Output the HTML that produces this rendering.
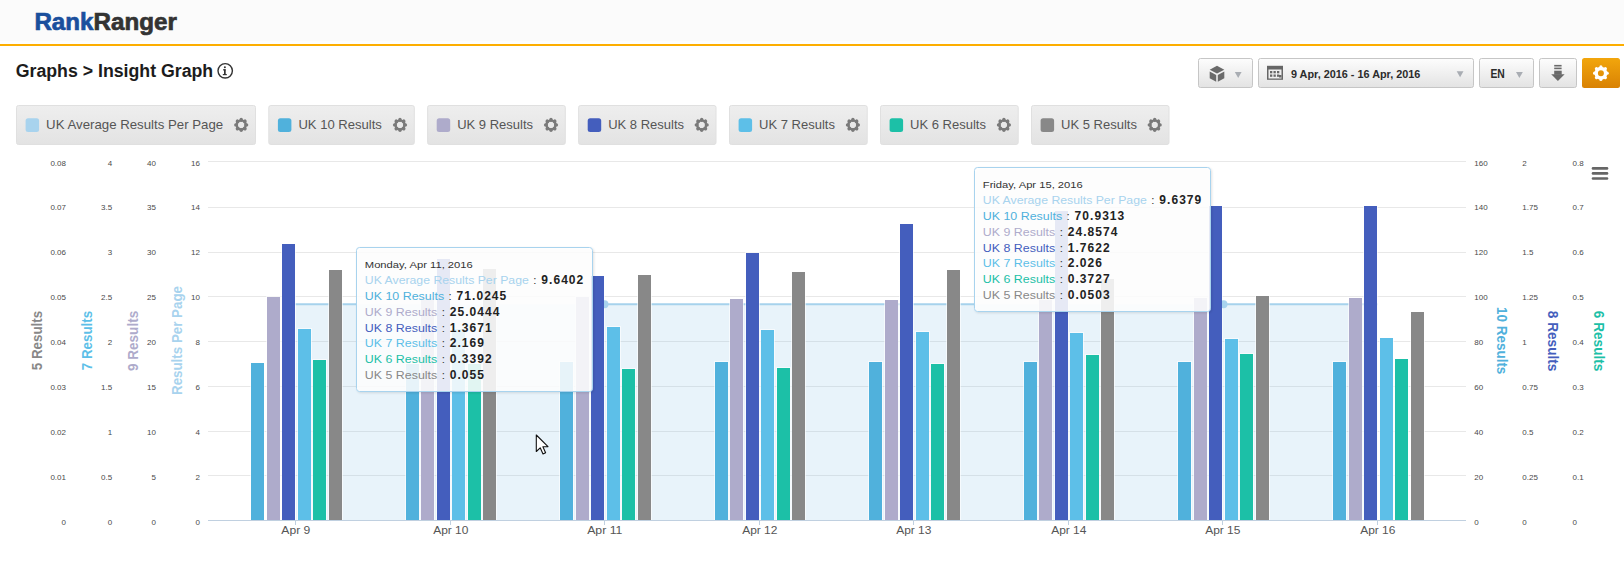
<!DOCTYPE html>
<html><head><meta charset="utf-8"><title>Insight Graph</title>
<style>
html,body{margin:0;padding:0;background:#fff;}
body{width:1624px;height:566px;overflow:hidden;position:relative;font-family:"Liberation Sans", sans-serif;}
svg{position:absolute;left:0;top:0;display:block;}
text{font-family:"Liberation Sans", sans-serif;}
</style></head><body>
<svg width="1624" height="566" viewBox="0 0 1624 566">
<defs>
<linearGradient id="gbtn" x1="0" y1="0" x2="0" y2="1">
<stop offset="0" stop-color="#fdfdfd"/><stop offset="1" stop-color="#e3e3e3"/></linearGradient>
<linearGradient id="gorg" x1="0" y1="0" x2="0" y2="1">
<stop offset="0" stop-color="#f2a60c"/><stop offset="1" stop-color="#d98204"/></linearGradient>
<linearGradient id="gleg" x1="0" y1="0" x2="0" y2="1">
<stop offset="0" stop-color="#eeeeee"/><stop offset="1" stop-color="#e3e3e3"/></linearGradient>
<filter id="tsh" x="-10%" y="-10%" width="120%" height="120%">
<feDropShadow dx="1" dy="1" stdDeviation="1.2" flood-color="#000" flood-opacity="0.12"/></filter>
</defs>

<rect x="0" y="0" width="1624" height="44" fill="#fbfbfb"/>
<rect x="0" y="41" width="1624" height="3" fill="#fdfefe"/>
<rect x="0" y="44" width="1624" height="2" fill="#fdae00"/>
<text x="34.4" y="29.7" font-size="24" font-weight="bold" textLength="142.4" lengthAdjust="spacingAndGlyphs"><tspan fill="#1a4f9d" stroke="#1a4f9d" stroke-width="0.7">Rank</tspan><tspan fill="#333333" stroke="#333333" stroke-width="0.7">Ranger</tspan></text>
<text x="15.7" y="76.5" font-size="18" fill="#1c1c1c" font-weight="bold" text-anchor="start" textLength="197.5" lengthAdjust="spacingAndGlyphs" >Graphs &gt; Insight Graph</text>
<circle cx="225.2" cy="70.8" r="7.2" fill="none" stroke="#333" stroke-width="1.4"/>
<rect x="224" y="69.3" width="1.7" height="5" fill="#333"/><rect x="222.8" y="74" width="4" height="1.2" fill="#333"/><rect x="223" y="69.3" width="2.6" height="1.1" fill="#333"/><circle cx="224.9" cy="67.2" r="1" fill="#333"/>
<rect x="1198.5" y="58.5" width="54" height="29" rx="2" ry="2" fill="url(#gbtn)" stroke="#c6c6c6" stroke-width="1"/>
<rect x="1258.5" y="58.5" width="215" height="29" rx="2" ry="2" fill="url(#gbtn)" stroke="#c6c6c6" stroke-width="1"/>
<rect x="1479.5" y="58.5" width="54" height="29" rx="2" ry="2" fill="url(#gbtn)" stroke="#c6c6c6" stroke-width="1"/>
<rect x="1539.5" y="58.5" width="37" height="29" rx="2" ry="2" fill="url(#gbtn)" stroke="#c6c6c6" stroke-width="1"/>
<rect x="1582" y="58" width="38" height="30" rx="2.5" fill="url(#gorg)"/>
<g fill="#6a6a6a"><polygon points="1217,65.8 1224.3,69.8 1217,73.6 1209.7,69.8"/><polygon points="1209.7,71.4 1216.2,75 1216.2,81.8 1209.7,78.2"/><polygon points="1224.3,71.4 1217.8,75 1217.8,81.8 1224.3,78.2"/></g>
<polygon points="1234.8,72.1 1241.6000000000001,72.1 1238.2,78.1" fill="#a9adb3"/>
<polygon points="1456.6999999999998,71.2 1463.5,71.2 1460.1,77.2" fill="#a9adb3"/>
<polygon points="1516.0,72 1522.8000000000002,72 1519.4,78" fill="#a9adb3"/>
<rect x="1267" y="65.8" width="16" height="14" fill="#666"/>
<rect x="1268.5" y="69.5" width="13" height="9" fill="#eee"/>
<rect x="1270" y="71" width="2.3" height="2.3" fill="#666"/>
<rect x="1273.5" y="71" width="2.3" height="2.3" fill="#666"/>
<rect x="1277" y="71" width="2.3" height="2.3" fill="#666"/>
<rect x="1270" y="74.5" width="2.3" height="2.3" fill="#666"/>
<rect x="1273.5" y="74.5" width="2.3" height="2.3" fill="#666"/>
<rect x="1277" y="74.5" width="2.3" height="2.3" fill="#666"/>
<rect x="1279" y="75" width="2.5" height="2.5" fill="#666"/>
<text x="1290.9" y="77.7" font-size="11" fill="#2b2b2b" font-weight="bold" text-anchor="start" textLength="129.5" lengthAdjust="spacingAndGlyphs" >9 Apr, 2016 - 16 Apr, 2016</text>
<text x="1490.4" y="77.8" font-size="12" fill="#2b2b2b" font-weight="bold" text-anchor="start" textLength="14.4" lengthAdjust="spacingAndGlyphs" >EN</text>
<g fill="#6a6a6a"><rect x="1554.2" y="64.9" width="7.4" height="1.6"/><rect x="1554.2" y="67.6" width="7.4" height="1.6"/><rect x="1554.2" y="70.7" width="7.5" height="4"/><polygon points="1551.2,74.2 1564.6,74.2 1557.9,80.9"/></g>
<g><circle cx="1600.9" cy="73.2" r="4.70" fill="none" stroke="#ffffff" stroke-width="3.40"/><line x1="1606.30" y1="73.20" x2="1607.20" y2="73.20" stroke="#ffffff" stroke-width="3.2" stroke-linecap="round"/><line x1="1604.72" y1="77.02" x2="1605.35" y2="77.65" stroke="#ffffff" stroke-width="3.2" stroke-linecap="round"/><line x1="1600.90" y1="78.60" x2="1600.90" y2="79.50" stroke="#ffffff" stroke-width="3.2" stroke-linecap="round"/><line x1="1597.08" y1="77.02" x2="1596.45" y2="77.65" stroke="#ffffff" stroke-width="3.2" stroke-linecap="round"/><line x1="1595.50" y1="73.20" x2="1594.60" y2="73.20" stroke="#ffffff" stroke-width="3.2" stroke-linecap="round"/><line x1="1597.08" y1="69.38" x2="1596.45" y2="68.75" stroke="#ffffff" stroke-width="3.2" stroke-linecap="round"/><line x1="1600.90" y1="67.80" x2="1600.90" y2="66.90" stroke="#ffffff" stroke-width="3.2" stroke-linecap="round"/><line x1="1604.72" y1="69.38" x2="1605.35" y2="68.75" stroke="#ffffff" stroke-width="3.2" stroke-linecap="round"/></g>
<rect x="16.5" y="105.5" width="239" height="39" rx="2" fill="url(#gleg)" stroke="#e0e0e0" stroke-width="1"/>
<rect x="25.6" y="118.2" width="13.5" height="13.8" rx="2.5" fill="#a8d3ee"/>
<text x="46.1" y="128.7" font-size="13" fill="#555555" font-weight="normal" text-anchor="start" textLength="177.1" lengthAdjust="spacingAndGlyphs" >UK Average Results Per Page</text>
<g><circle cx="241.2" cy="124.9" r="4.50" fill="none" stroke="#7a7a7a" stroke-width="2.40"/><line x1="245.90" y1="124.90" x2="246.60" y2="124.90" stroke="#7a7a7a" stroke-width="3.4" stroke-linecap="round"/><line x1="244.52" y1="128.22" x2="245.02" y2="128.72" stroke="#7a7a7a" stroke-width="3.4" stroke-linecap="round"/><line x1="241.20" y1="129.60" x2="241.20" y2="130.30" stroke="#7a7a7a" stroke-width="3.4" stroke-linecap="round"/><line x1="237.88" y1="128.22" x2="237.38" y2="128.72" stroke="#7a7a7a" stroke-width="3.4" stroke-linecap="round"/><line x1="236.50" y1="124.90" x2="235.80" y2="124.90" stroke="#7a7a7a" stroke-width="3.4" stroke-linecap="round"/><line x1="237.88" y1="121.58" x2="237.38" y2="121.08" stroke="#7a7a7a" stroke-width="3.4" stroke-linecap="round"/><line x1="241.20" y1="120.20" x2="241.20" y2="119.50" stroke="#7a7a7a" stroke-width="3.4" stroke-linecap="round"/><line x1="244.52" y1="121.58" x2="245.02" y2="121.08" stroke="#7a7a7a" stroke-width="3.4" stroke-linecap="round"/></g>
<rect x="268.8" y="105.5" width="145.5" height="39" rx="2" fill="url(#gleg)" stroke="#e0e0e0" stroke-width="1"/>
<rect x="277.90000000000003" y="118.2" width="13.5" height="13.8" rx="2.5" fill="#50b1dc"/>
<text x="298.4" y="128.7" font-size="13" fill="#555555" font-weight="normal" text-anchor="start" textLength="83.5" lengthAdjust="spacingAndGlyphs" >UK 10 Results</text>
<g><circle cx="400.0" cy="124.9" r="4.50" fill="none" stroke="#7a7a7a" stroke-width="2.40"/><line x1="404.70" y1="124.90" x2="405.40" y2="124.90" stroke="#7a7a7a" stroke-width="3.4" stroke-linecap="round"/><line x1="403.32" y1="128.22" x2="403.82" y2="128.72" stroke="#7a7a7a" stroke-width="3.4" stroke-linecap="round"/><line x1="400.00" y1="129.60" x2="400.00" y2="130.30" stroke="#7a7a7a" stroke-width="3.4" stroke-linecap="round"/><line x1="396.68" y1="128.22" x2="396.18" y2="128.72" stroke="#7a7a7a" stroke-width="3.4" stroke-linecap="round"/><line x1="395.30" y1="124.90" x2="394.60" y2="124.90" stroke="#7a7a7a" stroke-width="3.4" stroke-linecap="round"/><line x1="396.68" y1="121.58" x2="396.18" y2="121.08" stroke="#7a7a7a" stroke-width="3.4" stroke-linecap="round"/><line x1="400.00" y1="120.20" x2="400.00" y2="119.50" stroke="#7a7a7a" stroke-width="3.4" stroke-linecap="round"/><line x1="403.32" y1="121.58" x2="403.82" y2="121.08" stroke="#7a7a7a" stroke-width="3.4" stroke-linecap="round"/></g>
<rect x="427.6" y="105.5" width="137.69999999999993" height="39" rx="2" fill="url(#gleg)" stroke="#e0e0e0" stroke-width="1"/>
<rect x="436.70000000000005" y="118.2" width="13.5" height="13.8" rx="2.5" fill="#aeabcb"/>
<text x="457.2" y="128.7" font-size="13" fill="#555555" font-weight="normal" text-anchor="start" textLength="75.9" lengthAdjust="spacingAndGlyphs" >UK 9 Results</text>
<g><circle cx="551.0" cy="124.9" r="4.50" fill="none" stroke="#7a7a7a" stroke-width="2.40"/><line x1="555.70" y1="124.90" x2="556.40" y2="124.90" stroke="#7a7a7a" stroke-width="3.4" stroke-linecap="round"/><line x1="554.32" y1="128.22" x2="554.82" y2="128.72" stroke="#7a7a7a" stroke-width="3.4" stroke-linecap="round"/><line x1="551.00" y1="129.60" x2="551.00" y2="130.30" stroke="#7a7a7a" stroke-width="3.4" stroke-linecap="round"/><line x1="547.68" y1="128.22" x2="547.18" y2="128.72" stroke="#7a7a7a" stroke-width="3.4" stroke-linecap="round"/><line x1="546.30" y1="124.90" x2="545.60" y2="124.90" stroke="#7a7a7a" stroke-width="3.4" stroke-linecap="round"/><line x1="547.68" y1="121.58" x2="547.18" y2="121.08" stroke="#7a7a7a" stroke-width="3.4" stroke-linecap="round"/><line x1="551.00" y1="120.20" x2="551.00" y2="119.50" stroke="#7a7a7a" stroke-width="3.4" stroke-linecap="round"/><line x1="554.32" y1="121.58" x2="554.82" y2="121.08" stroke="#7a7a7a" stroke-width="3.4" stroke-linecap="round"/></g>
<rect x="578.6" y="105.5" width="137.39999999999998" height="39" rx="2" fill="url(#gleg)" stroke="#e0e0e0" stroke-width="1"/>
<rect x="587.7" y="118.2" width="13.5" height="13.8" rx="2.5" fill="#445ebd"/>
<text x="608.2" y="128.7" font-size="13" fill="#555555" font-weight="normal" text-anchor="start" textLength="75.9" lengthAdjust="spacingAndGlyphs" >UK 8 Results</text>
<g><circle cx="701.7" cy="124.9" r="4.50" fill="none" stroke="#7a7a7a" stroke-width="2.40"/><line x1="706.40" y1="124.90" x2="707.10" y2="124.90" stroke="#7a7a7a" stroke-width="3.4" stroke-linecap="round"/><line x1="705.02" y1="128.22" x2="705.52" y2="128.72" stroke="#7a7a7a" stroke-width="3.4" stroke-linecap="round"/><line x1="701.70" y1="129.60" x2="701.70" y2="130.30" stroke="#7a7a7a" stroke-width="3.4" stroke-linecap="round"/><line x1="698.38" y1="128.22" x2="697.88" y2="128.72" stroke="#7a7a7a" stroke-width="3.4" stroke-linecap="round"/><line x1="697.00" y1="124.90" x2="696.30" y2="124.90" stroke="#7a7a7a" stroke-width="3.4" stroke-linecap="round"/><line x1="698.38" y1="121.58" x2="697.88" y2="121.08" stroke="#7a7a7a" stroke-width="3.4" stroke-linecap="round"/><line x1="701.70" y1="120.20" x2="701.70" y2="119.50" stroke="#7a7a7a" stroke-width="3.4" stroke-linecap="round"/><line x1="705.02" y1="121.58" x2="705.52" y2="121.08" stroke="#7a7a7a" stroke-width="3.4" stroke-linecap="round"/></g>
<rect x="729.5" y="105.5" width="137.70000000000005" height="39" rx="2" fill="url(#gleg)" stroke="#e0e0e0" stroke-width="1"/>
<rect x="738.6" y="118.2" width="13.5" height="13.8" rx="2.5" fill="#5dbfe8"/>
<text x="759.1" y="128.7" font-size="13" fill="#555555" font-weight="normal" text-anchor="start" textLength="75.9" lengthAdjust="spacingAndGlyphs" >UK 7 Results</text>
<g><circle cx="852.9" cy="124.9" r="4.50" fill="none" stroke="#7a7a7a" stroke-width="2.40"/><line x1="857.60" y1="124.90" x2="858.30" y2="124.90" stroke="#7a7a7a" stroke-width="3.4" stroke-linecap="round"/><line x1="856.22" y1="128.22" x2="856.72" y2="128.72" stroke="#7a7a7a" stroke-width="3.4" stroke-linecap="round"/><line x1="852.90" y1="129.60" x2="852.90" y2="130.30" stroke="#7a7a7a" stroke-width="3.4" stroke-linecap="round"/><line x1="849.58" y1="128.22" x2="849.08" y2="128.72" stroke="#7a7a7a" stroke-width="3.4" stroke-linecap="round"/><line x1="848.20" y1="124.90" x2="847.50" y2="124.90" stroke="#7a7a7a" stroke-width="3.4" stroke-linecap="round"/><line x1="849.58" y1="121.58" x2="849.08" y2="121.08" stroke="#7a7a7a" stroke-width="3.4" stroke-linecap="round"/><line x1="852.90" y1="120.20" x2="852.90" y2="119.50" stroke="#7a7a7a" stroke-width="3.4" stroke-linecap="round"/><line x1="856.22" y1="121.58" x2="856.72" y2="121.08" stroke="#7a7a7a" stroke-width="3.4" stroke-linecap="round"/></g>
<rect x="880.5" y="105.5" width="137.70000000000005" height="39" rx="2" fill="url(#gleg)" stroke="#e0e0e0" stroke-width="1"/>
<rect x="889.6" y="118.2" width="13.5" height="13.8" rx="2.5" fill="#1cc0a7"/>
<text x="910.1" y="128.7" font-size="13" fill="#555555" font-weight="normal" text-anchor="start" textLength="75.9" lengthAdjust="spacingAndGlyphs" >UK 6 Results</text>
<g><circle cx="1003.9" cy="124.9" r="4.50" fill="none" stroke="#7a7a7a" stroke-width="2.40"/><line x1="1008.60" y1="124.90" x2="1009.30" y2="124.90" stroke="#7a7a7a" stroke-width="3.4" stroke-linecap="round"/><line x1="1007.22" y1="128.22" x2="1007.72" y2="128.72" stroke="#7a7a7a" stroke-width="3.4" stroke-linecap="round"/><line x1="1003.90" y1="129.60" x2="1003.90" y2="130.30" stroke="#7a7a7a" stroke-width="3.4" stroke-linecap="round"/><line x1="1000.58" y1="128.22" x2="1000.08" y2="128.72" stroke="#7a7a7a" stroke-width="3.4" stroke-linecap="round"/><line x1="999.20" y1="124.90" x2="998.50" y2="124.90" stroke="#7a7a7a" stroke-width="3.4" stroke-linecap="round"/><line x1="1000.58" y1="121.58" x2="1000.08" y2="121.08" stroke="#7a7a7a" stroke-width="3.4" stroke-linecap="round"/><line x1="1003.90" y1="120.20" x2="1003.90" y2="119.50" stroke="#7a7a7a" stroke-width="3.4" stroke-linecap="round"/><line x1="1007.22" y1="121.58" x2="1007.72" y2="121.08" stroke="#7a7a7a" stroke-width="3.4" stroke-linecap="round"/></g>
<rect x="1031.5" y="105.5" width="137.5" height="39" rx="2" fill="url(#gleg)" stroke="#e0e0e0" stroke-width="1"/>
<rect x="1040.6" y="118.2" width="13.5" height="13.8" rx="2.5" fill="#888888"/>
<text x="1061.1" y="128.7" font-size="13" fill="#555555" font-weight="normal" text-anchor="start" textLength="75.9" lengthAdjust="spacingAndGlyphs" >UK 5 Results</text>
<g><circle cx="1154.7" cy="124.9" r="4.50" fill="none" stroke="#7a7a7a" stroke-width="2.40"/><line x1="1159.40" y1="124.90" x2="1160.10" y2="124.90" stroke="#7a7a7a" stroke-width="3.4" stroke-linecap="round"/><line x1="1158.02" y1="128.22" x2="1158.52" y2="128.72" stroke="#7a7a7a" stroke-width="3.4" stroke-linecap="round"/><line x1="1154.70" y1="129.60" x2="1154.70" y2="130.30" stroke="#7a7a7a" stroke-width="3.4" stroke-linecap="round"/><line x1="1151.38" y1="128.22" x2="1150.88" y2="128.72" stroke="#7a7a7a" stroke-width="3.4" stroke-linecap="round"/><line x1="1150.00" y1="124.90" x2="1149.30" y2="124.90" stroke="#7a7a7a" stroke-width="3.4" stroke-linecap="round"/><line x1="1151.38" y1="121.58" x2="1150.88" y2="121.08" stroke="#7a7a7a" stroke-width="3.4" stroke-linecap="round"/><line x1="1154.70" y1="120.20" x2="1154.70" y2="119.50" stroke="#7a7a7a" stroke-width="3.4" stroke-linecap="round"/><line x1="1158.02" y1="121.58" x2="1158.52" y2="121.08" stroke="#7a7a7a" stroke-width="3.4" stroke-linecap="round"/></g>
<rect x="208" y="161" width="1258" height="1" fill="#e8e8e8"/>
<rect x="208" y="207" width="1258" height="1" fill="#e8e8e8"/>
<rect x="208" y="252" width="1258" height="1" fill="#e8e8e8"/>
<rect x="208" y="296" width="1258" height="1" fill="#e8e8e8"/>
<rect x="208" y="341" width="1258" height="1" fill="#e8e8e8"/>
<rect x="208" y="386" width="1258" height="1" fill="#e8e8e8"/>
<rect x="208" y="431" width="1258" height="1" fill="#e8e8e8"/>
<rect x="208" y="475" width="1258" height="1" fill="#e8e8e8"/>
<path d="M295.5,520.5 L295.5,304.2 L1377.5,304.2 L1377.5,520.5 Z" fill="rgba(140,195,232,0.2)"/>
<line x1="295.3" y1="304.2" x2="357" y2="304.2" stroke="#a6d2ec" stroke-width="2"/>
<line x1="592" y1="304.2" x2="975" y2="304.2" stroke="#a6d2ec" stroke-width="2"/>
<line x1="1210" y1="304.2" x2="1377.5" y2="304.2" stroke="#a6d2ec" stroke-width="2"/>
<rect x="250" y="362" width="15" height="158" fill="rgba(255,255,255,0.6)"/>
<rect x="266" y="296" width="15" height="224" fill="rgba(255,255,255,0.6)"/>
<rect x="281" y="243" width="15" height="277" fill="rgba(255,255,255,0.6)"/>
<rect x="297" y="328" width="15" height="192" fill="rgba(255,255,255,0.6)"/>
<rect x="312" y="359" width="15" height="161" fill="rgba(255,255,255,0.6)"/>
<rect x="328" y="269" width="15" height="251" fill="rgba(255,255,255,0.6)"/>
<rect x="405" y="363" width="15" height="157" fill="rgba(255,255,255,0.6)"/>
<rect x="420" y="297" width="15" height="223" fill="rgba(255,255,255,0.6)"/>
<rect x="436" y="258" width="15" height="262" fill="rgba(255,255,255,0.6)"/>
<rect x="451" y="328" width="15" height="192" fill="rgba(255,255,255,0.6)"/>
<rect x="467" y="363" width="15" height="157" fill="rgba(255,255,255,0.6)"/>
<rect x="482" y="268" width="15" height="252" fill="rgba(255,255,255,0.6)"/>
<rect x="559" y="361" width="15" height="159" fill="rgba(255,255,255,0.6)"/>
<rect x="575" y="296" width="15" height="224" fill="rgba(255,255,255,0.6)"/>
<rect x="590" y="275" width="15" height="245" fill="rgba(255,255,255,0.6)"/>
<rect x="606" y="326" width="15" height="194" fill="rgba(255,255,255,0.6)"/>
<rect x="621" y="368" width="15" height="152" fill="rgba(255,255,255,0.6)"/>
<rect x="637" y="274" width="15" height="246" fill="rgba(255,255,255,0.6)"/>
<rect x="714" y="361" width="15" height="159" fill="rgba(255,255,255,0.6)"/>
<rect x="729" y="298" width="15" height="222" fill="rgba(255,255,255,0.6)"/>
<rect x="745" y="252" width="15" height="268" fill="rgba(255,255,255,0.6)"/>
<rect x="760" y="329" width="15" height="191" fill="rgba(255,255,255,0.6)"/>
<rect x="776" y="367" width="15" height="153" fill="rgba(255,255,255,0.6)"/>
<rect x="791" y="271" width="15" height="249" fill="rgba(255,255,255,0.6)"/>
<rect x="868" y="361" width="15" height="159" fill="rgba(255,255,255,0.6)"/>
<rect x="884" y="299" width="15" height="221" fill="rgba(255,255,255,0.6)"/>
<rect x="899" y="223" width="15" height="297" fill="rgba(255,255,255,0.6)"/>
<rect x="915" y="331" width="15" height="189" fill="rgba(255,255,255,0.6)"/>
<rect x="930" y="363" width="15" height="157" fill="rgba(255,255,255,0.6)"/>
<rect x="946" y="269" width="15" height="251" fill="rgba(255,255,255,0.6)"/>
<rect x="1023" y="361" width="15" height="159" fill="rgba(255,255,255,0.6)"/>
<rect x="1038" y="299" width="15" height="221" fill="rgba(255,255,255,0.6)"/>
<rect x="1054" y="210" width="15" height="310" fill="rgba(255,255,255,0.6)"/>
<rect x="1069" y="332" width="15" height="188" fill="rgba(255,255,255,0.6)"/>
<rect x="1085" y="354" width="15" height="166" fill="rgba(255,255,255,0.6)"/>
<rect x="1100" y="278" width="15" height="242" fill="rgba(255,255,255,0.6)"/>
<rect x="1177" y="361" width="15" height="159" fill="rgba(255,255,255,0.6)"/>
<rect x="1193" y="297" width="15" height="223" fill="rgba(255,255,255,0.6)"/>
<rect x="1208" y="205" width="15" height="315" fill="rgba(255,255,255,0.6)"/>
<rect x="1224" y="338" width="15" height="182" fill="rgba(255,255,255,0.6)"/>
<rect x="1239" y="353" width="15" height="167" fill="rgba(255,255,255,0.6)"/>
<rect x="1255" y="295" width="15" height="225" fill="rgba(255,255,255,0.6)"/>
<rect x="1332" y="361" width="15" height="159" fill="rgba(255,255,255,0.6)"/>
<rect x="1348" y="297" width="15" height="223" fill="rgba(255,255,255,0.6)"/>
<rect x="1363" y="205" width="15" height="315" fill="rgba(255,255,255,0.6)"/>
<rect x="1379" y="337" width="15" height="183" fill="rgba(255,255,255,0.6)"/>
<rect x="1394" y="358" width="15" height="162" fill="rgba(255,255,255,0.6)"/>
<rect x="1410" y="311" width="15" height="209" fill="rgba(255,255,255,0.6)"/>
<circle cx="604.5" cy="304.2" r="4" fill="#a8d3ee"/>
<circle cx="1223.5" cy="304.2" r="4" fill="#a8d3ee"/>
<rect x="251" y="363" width="13" height="157" fill="#50b1dc"/>
<rect x="267" y="297" width="13" height="223" fill="#aeabcb"/>
<rect x="282" y="244" width="13" height="276" fill="#445ebd"/>
<rect x="298" y="329" width="13" height="191" fill="#5dbfe8"/>
<rect x="313" y="360" width="13" height="160" fill="#1cc0a7"/>
<rect x="329" y="270" width="13" height="250" fill="#888888"/>
<rect x="406" y="364" width="13" height="156" fill="#50b1dc"/>
<rect x="421" y="298" width="13" height="222" fill="#aeabcb"/>
<rect x="437" y="259" width="13" height="261" fill="#445ebd"/>
<rect x="452" y="329" width="13" height="191" fill="#5dbfe8"/>
<rect x="468" y="364" width="13" height="156" fill="#1cc0a7"/>
<rect x="483" y="269" width="13" height="251" fill="#888888"/>
<rect x="560" y="362" width="13" height="158" fill="#50b1dc"/>
<rect x="576" y="297" width="13" height="223" fill="#aeabcb"/>
<rect x="591" y="276" width="13" height="244" fill="#445ebd"/>
<rect x="607" y="327" width="13" height="193" fill="#5dbfe8"/>
<rect x="622" y="369" width="13" height="151" fill="#1cc0a7"/>
<rect x="638" y="275" width="13" height="245" fill="#888888"/>
<rect x="715" y="362" width="13" height="158" fill="#50b1dc"/>
<rect x="730" y="299" width="13" height="221" fill="#aeabcb"/>
<rect x="746" y="253" width="13" height="267" fill="#445ebd"/>
<rect x="761" y="330" width="13" height="190" fill="#5dbfe8"/>
<rect x="777" y="368" width="13" height="152" fill="#1cc0a7"/>
<rect x="792" y="272" width="13" height="248" fill="#888888"/>
<rect x="869" y="362" width="13" height="158" fill="#50b1dc"/>
<rect x="885" y="300" width="13" height="220" fill="#aeabcb"/>
<rect x="900" y="224" width="13" height="296" fill="#445ebd"/>
<rect x="916" y="332" width="13" height="188" fill="#5dbfe8"/>
<rect x="931" y="364" width="13" height="156" fill="#1cc0a7"/>
<rect x="947" y="270" width="13" height="250" fill="#888888"/>
<rect x="1024" y="362" width="13" height="158" fill="#50b1dc"/>
<rect x="1039" y="300" width="13" height="220" fill="#aeabcb"/>
<rect x="1055" y="211" width="13" height="309" fill="#445ebd"/>
<rect x="1070" y="333" width="13" height="187" fill="#5dbfe8"/>
<rect x="1086" y="355" width="13" height="165" fill="#1cc0a7"/>
<rect x="1101" y="279" width="13" height="241" fill="#888888"/>
<rect x="1178" y="362" width="13" height="158" fill="#50b1dc"/>
<rect x="1194" y="298" width="13" height="222" fill="#aeabcb"/>
<rect x="1209" y="206" width="13" height="314" fill="#445ebd"/>
<rect x="1225" y="339" width="13" height="181" fill="#5dbfe8"/>
<rect x="1240" y="354" width="13" height="166" fill="#1cc0a7"/>
<rect x="1256" y="296" width="13" height="224" fill="#888888"/>
<rect x="1333" y="362" width="13" height="158" fill="#50b1dc"/>
<rect x="1349" y="298" width="13" height="222" fill="#aeabcb"/>
<rect x="1364" y="206" width="13" height="314" fill="#445ebd"/>
<rect x="1380" y="338" width="13" height="182" fill="#5dbfe8"/>
<rect x="1395" y="359" width="13" height="161" fill="#1cc0a7"/>
<rect x="1411" y="312" width="13" height="208" fill="#888888"/>
<rect x="208" y="520" width="1258" height="1" fill="#c0d0e0"/>
<rect x="295.0" y="520" width="1" height="5" fill="#c0d0e0"/>
<text x="295.8" y="534" font-size="11.2" fill="#555555" font-weight="normal" text-anchor="middle" textLength="29" lengthAdjust="spacingAndGlyphs" >Apr 9</text>
<rect x="450.0" y="520" width="1" height="5" fill="#c0d0e0"/>
<text x="450.8" y="534" font-size="11.2" fill="#555555" font-weight="normal" text-anchor="middle" textLength="35.3" lengthAdjust="spacingAndGlyphs" >Apr 10</text>
<rect x="604.0" y="520" width="1" height="5" fill="#c0d0e0"/>
<text x="604.8" y="534" font-size="11.2" fill="#555555" font-weight="normal" text-anchor="middle" textLength="35.3" lengthAdjust="spacingAndGlyphs" >Apr 11</text>
<rect x="759.0" y="520" width="1" height="5" fill="#c0d0e0"/>
<text x="759.8" y="534" font-size="11.2" fill="#555555" font-weight="normal" text-anchor="middle" textLength="35.3" lengthAdjust="spacingAndGlyphs" >Apr 12</text>
<rect x="913.0" y="520" width="1" height="5" fill="#c0d0e0"/>
<text x="913.8" y="534" font-size="11.2" fill="#555555" font-weight="normal" text-anchor="middle" textLength="35.3" lengthAdjust="spacingAndGlyphs" >Apr 13</text>
<rect x="1068.0" y="520" width="1" height="5" fill="#c0d0e0"/>
<text x="1068.8" y="534" font-size="11.2" fill="#555555" font-weight="normal" text-anchor="middle" textLength="35.3" lengthAdjust="spacingAndGlyphs" >Apr 14</text>
<rect x="1222.0" y="520" width="1" height="5" fill="#c0d0e0"/>
<text x="1222.8" y="534" font-size="11.2" fill="#555555" font-weight="normal" text-anchor="middle" textLength="35.3" lengthAdjust="spacingAndGlyphs" >Apr 15</text>
<rect x="1377.0" y="520" width="1" height="5" fill="#c0d0e0"/>
<text x="1377.8" y="534" font-size="11.2" fill="#555555" font-weight="normal" text-anchor="middle" textLength="35.3" lengthAdjust="spacingAndGlyphs" >Apr 16</text>
<text x="66.0" y="524.5" font-size="8" fill="#4a4a4a" font-weight="normal" text-anchor="end" >0</text>
<text x="112.1" y="524.5" font-size="8" fill="#4a4a4a" font-weight="normal" text-anchor="end" >0</text>
<text x="156.0" y="524.5" font-size="8" fill="#4a4a4a" font-weight="normal" text-anchor="end" >0</text>
<text x="200.0" y="524.5" font-size="8" fill="#4a4a4a" font-weight="normal" text-anchor="end" >0</text>
<text x="1474.3" y="524.5" font-size="8" fill="#4a4a4a" font-weight="normal" text-anchor="start" >0</text>
<text x="1522.3" y="524.5" font-size="8" fill="#4a4a4a" font-weight="normal" text-anchor="start" >0</text>
<text x="1572.5" y="524.5" font-size="8" fill="#4a4a4a" font-weight="normal" text-anchor="start" >0</text>
<text x="66.0" y="479.6" font-size="8" fill="#4a4a4a" font-weight="normal" text-anchor="end" >0.01</text>
<text x="112.1" y="479.6" font-size="8" fill="#4a4a4a" font-weight="normal" text-anchor="end" >0.5</text>
<text x="156.0" y="479.6" font-size="8" fill="#4a4a4a" font-weight="normal" text-anchor="end" >5</text>
<text x="200.0" y="479.6" font-size="8" fill="#4a4a4a" font-weight="normal" text-anchor="end" >2</text>
<text x="1474.3" y="479.6" font-size="8" fill="#4a4a4a" font-weight="normal" text-anchor="start" >20</text>
<text x="1522.3" y="479.6" font-size="8" fill="#4a4a4a" font-weight="normal" text-anchor="start" >0.25</text>
<text x="1572.5" y="479.6" font-size="8" fill="#4a4a4a" font-weight="normal" text-anchor="start" >0.1</text>
<text x="66.0" y="434.8" font-size="8" fill="#4a4a4a" font-weight="normal" text-anchor="end" >0.02</text>
<text x="112.1" y="434.8" font-size="8" fill="#4a4a4a" font-weight="normal" text-anchor="end" >1</text>
<text x="156.0" y="434.8" font-size="8" fill="#4a4a4a" font-weight="normal" text-anchor="end" >10</text>
<text x="200.0" y="434.8" font-size="8" fill="#4a4a4a" font-weight="normal" text-anchor="end" >4</text>
<text x="1474.3" y="434.8" font-size="8" fill="#4a4a4a" font-weight="normal" text-anchor="start" >40</text>
<text x="1522.3" y="434.8" font-size="8" fill="#4a4a4a" font-weight="normal" text-anchor="start" >0.5</text>
<text x="1572.5" y="434.8" font-size="8" fill="#4a4a4a" font-weight="normal" text-anchor="start" >0.2</text>
<text x="66.0" y="389.9" font-size="8" fill="#4a4a4a" font-weight="normal" text-anchor="end" >0.03</text>
<text x="112.1" y="389.9" font-size="8" fill="#4a4a4a" font-weight="normal" text-anchor="end" >1.5</text>
<text x="156.0" y="389.9" font-size="8" fill="#4a4a4a" font-weight="normal" text-anchor="end" >15</text>
<text x="200.0" y="389.9" font-size="8" fill="#4a4a4a" font-weight="normal" text-anchor="end" >6</text>
<text x="1474.3" y="389.9" font-size="8" fill="#4a4a4a" font-weight="normal" text-anchor="start" >60</text>
<text x="1522.3" y="389.9" font-size="8" fill="#4a4a4a" font-weight="normal" text-anchor="start" >0.75</text>
<text x="1572.5" y="389.9" font-size="8" fill="#4a4a4a" font-weight="normal" text-anchor="start" >0.3</text>
<text x="66.0" y="345.0" font-size="8" fill="#4a4a4a" font-weight="normal" text-anchor="end" >0.04</text>
<text x="112.1" y="345.0" font-size="8" fill="#4a4a4a" font-weight="normal" text-anchor="end" >2</text>
<text x="156.0" y="345.0" font-size="8" fill="#4a4a4a" font-weight="normal" text-anchor="end" >20</text>
<text x="200.0" y="345.0" font-size="8" fill="#4a4a4a" font-weight="normal" text-anchor="end" >8</text>
<text x="1474.3" y="345.0" font-size="8" fill="#4a4a4a" font-weight="normal" text-anchor="start" >80</text>
<text x="1522.3" y="345.0" font-size="8" fill="#4a4a4a" font-weight="normal" text-anchor="start" >1</text>
<text x="1572.5" y="345.0" font-size="8" fill="#4a4a4a" font-weight="normal" text-anchor="start" >0.4</text>
<text x="66.0" y="300.1" font-size="8" fill="#4a4a4a" font-weight="normal" text-anchor="end" >0.05</text>
<text x="112.1" y="300.1" font-size="8" fill="#4a4a4a" font-weight="normal" text-anchor="end" >2.5</text>
<text x="156.0" y="300.1" font-size="8" fill="#4a4a4a" font-weight="normal" text-anchor="end" >25</text>
<text x="200.0" y="300.1" font-size="8" fill="#4a4a4a" font-weight="normal" text-anchor="end" >10</text>
<text x="1474.3" y="300.1" font-size="8" fill="#4a4a4a" font-weight="normal" text-anchor="start" >100</text>
<text x="1522.3" y="300.1" font-size="8" fill="#4a4a4a" font-weight="normal" text-anchor="start" >1.25</text>
<text x="1572.5" y="300.1" font-size="8" fill="#4a4a4a" font-weight="normal" text-anchor="start" >0.5</text>
<text x="66.0" y="255.2" font-size="8" fill="#4a4a4a" font-weight="normal" text-anchor="end" >0.06</text>
<text x="112.1" y="255.2" font-size="8" fill="#4a4a4a" font-weight="normal" text-anchor="end" >3</text>
<text x="156.0" y="255.2" font-size="8" fill="#4a4a4a" font-weight="normal" text-anchor="end" >30</text>
<text x="200.0" y="255.2" font-size="8" fill="#4a4a4a" font-weight="normal" text-anchor="end" >12</text>
<text x="1474.3" y="255.2" font-size="8" fill="#4a4a4a" font-weight="normal" text-anchor="start" >120</text>
<text x="1522.3" y="255.2" font-size="8" fill="#4a4a4a" font-weight="normal" text-anchor="start" >1.5</text>
<text x="1572.5" y="255.2" font-size="8" fill="#4a4a4a" font-weight="normal" text-anchor="start" >0.6</text>
<text x="66.0" y="210.4" font-size="8" fill="#4a4a4a" font-weight="normal" text-anchor="end" >0.07</text>
<text x="112.1" y="210.4" font-size="8" fill="#4a4a4a" font-weight="normal" text-anchor="end" >3.5</text>
<text x="156.0" y="210.4" font-size="8" fill="#4a4a4a" font-weight="normal" text-anchor="end" >35</text>
<text x="200.0" y="210.4" font-size="8" fill="#4a4a4a" font-weight="normal" text-anchor="end" >14</text>
<text x="1474.3" y="210.4" font-size="8" fill="#4a4a4a" font-weight="normal" text-anchor="start" >140</text>
<text x="1522.3" y="210.4" font-size="8" fill="#4a4a4a" font-weight="normal" text-anchor="start" >1.75</text>
<text x="1572.5" y="210.4" font-size="8" fill="#4a4a4a" font-weight="normal" text-anchor="start" >0.7</text>
<text x="66.0" y="165.5" font-size="8" fill="#4a4a4a" font-weight="normal" text-anchor="end" >0.08</text>
<text x="112.1" y="165.5" font-size="8" fill="#4a4a4a" font-weight="normal" text-anchor="end" >4</text>
<text x="156.0" y="165.5" font-size="8" fill="#4a4a4a" font-weight="normal" text-anchor="end" >40</text>
<text x="200.0" y="165.5" font-size="8" fill="#4a4a4a" font-weight="normal" text-anchor="end" >16</text>
<text x="1474.3" y="165.5" font-size="8" fill="#4a4a4a" font-weight="normal" text-anchor="start" >160</text>
<text x="1522.3" y="165.5" font-size="8" fill="#4a4a4a" font-weight="normal" text-anchor="start" >2</text>
<text x="1572.5" y="165.5" font-size="8" fill="#4a4a4a" font-weight="normal" text-anchor="start" >0.8</text>
<text x="0" y="0" font-size="14.6" font-weight="bold" fill="#888888" text-anchor="middle" textLength="59.3" lengthAdjust="spacingAndGlyphs" transform="translate(41.8,340.5) rotate(-90)">5 Results</text>
<text x="0" y="0" font-size="14.6" font-weight="bold" fill="#5dbfe8" text-anchor="middle" textLength="59.3" lengthAdjust="spacingAndGlyphs" transform="translate(92.2,340.5) rotate(-90)">7 Results</text>
<text x="0" y="0" font-size="14.6" font-weight="bold" fill="#aeabcb" text-anchor="middle" textLength="60.1" lengthAdjust="spacingAndGlyphs" transform="translate(137.7,340.9) rotate(-90)">9 Results</text>
<text x="0" y="0" font-size="14.6" font-weight="bold" fill="#a8d3ee" text-anchor="middle" textLength="109" lengthAdjust="spacingAndGlyphs" transform="translate(181.9,340.5) rotate(-90)">Results Per Page</text>
<text x="0" y="0" font-size="14.6" font-weight="bold" fill="#50b1dc" text-anchor="middle" textLength="67.3" lengthAdjust="spacingAndGlyphs" transform="translate(1496.6,340.7) rotate(90)">10 Results</text>
<text x="0" y="0" font-size="14.6" font-weight="bold" fill="#445ebd" text-anchor="middle" textLength="60.6" lengthAdjust="spacingAndGlyphs" transform="translate(1547.8,341.1) rotate(90)">8 Results</text>
<text x="0" y="0" font-size="14.6" font-weight="bold" fill="#1cc0a7" text-anchor="middle" textLength="60.6" lengthAdjust="spacingAndGlyphs" transform="translate(1593.6,341.1) rotate(90)">6 Results</text>
<line x1="1593" y1="168.4" x2="1607" y2="168.4" stroke="#666" stroke-width="2.6" stroke-linecap="round"/>
<line x1="1593" y1="173.4" x2="1607" y2="173.4" stroke="#666" stroke-width="2.6" stroke-linecap="round"/>
<line x1="1593" y1="178.5" x2="1607" y2="178.5" stroke="#666" stroke-width="2.6" stroke-linecap="round"/>
<g filter="url(#tsh)"><rect x="356.5" y="247.5" width="236" height="144" rx="3" fill="rgba(255,255,255,0.86)" stroke="#a8d3ee" stroke-width="1"/></g>
<text x="364.8" y="268" font-size="9.3" fill="#333333" font-weight="normal" text-anchor="start" textLength="108" lengthAdjust="spacingAndGlyphs" >Monday, Apr 11, 2016</text>
<text x="364.8" y="283.8" font-size="11.5" fill="#a8d3ee" font-weight="normal" text-anchor="start" textLength="164" lengthAdjust="spacingAndGlyphs" >UK Average Results Per Page</text>
<text x="533.3" y="283.8" font-size="11.5" fill="#333333" font-weight="normal" text-anchor="start" >:</text>
<text x="541.3" y="283.8" font-size="12" fill="#222222" font-weight="bold" text-anchor="start" letter-spacing="1.05">9.6402</text>
<text x="364.8" y="299.7" font-size="11.5" fill="#50b1dc" font-weight="normal" text-anchor="start" textLength="79.3" lengthAdjust="spacingAndGlyphs" >UK 10 Results</text>
<text x="448.6" y="299.7" font-size="11.5" fill="#333333" font-weight="normal" text-anchor="start" >:</text>
<text x="456.6" y="299.7" font-size="12" fill="#222222" font-weight="bold" text-anchor="start" letter-spacing="1.05">71.0245</text>
<text x="364.8" y="315.6" font-size="11.5" fill="#aeabcb" font-weight="normal" text-anchor="start" textLength="72.4" lengthAdjust="spacingAndGlyphs" >UK 9 Results</text>
<text x="441.7" y="315.6" font-size="11.5" fill="#333333" font-weight="normal" text-anchor="start" >:</text>
<text x="449.7" y="315.6" font-size="12" fill="#222222" font-weight="bold" text-anchor="start" letter-spacing="1.05">25.0444</text>
<text x="364.8" y="331.5" font-size="11.5" fill="#445ebd" font-weight="normal" text-anchor="start" textLength="72.4" lengthAdjust="spacingAndGlyphs" >UK 8 Results</text>
<text x="441.7" y="331.5" font-size="11.5" fill="#333333" font-weight="normal" text-anchor="start" >:</text>
<text x="449.7" y="331.5" font-size="12" fill="#222222" font-weight="bold" text-anchor="start" letter-spacing="1.05">1.3671</text>
<text x="364.8" y="347.4" font-size="11.5" fill="#5dbfe8" font-weight="normal" text-anchor="start" textLength="72.4" lengthAdjust="spacingAndGlyphs" >UK 7 Results</text>
<text x="441.7" y="347.4" font-size="11.5" fill="#333333" font-weight="normal" text-anchor="start" >:</text>
<text x="449.7" y="347.4" font-size="12" fill="#222222" font-weight="bold" text-anchor="start" letter-spacing="1.05">2.169</text>
<text x="364.8" y="363.3" font-size="11.5" fill="#1cc0a7" font-weight="normal" text-anchor="start" textLength="72.4" lengthAdjust="spacingAndGlyphs" >UK 6 Results</text>
<text x="441.7" y="363.3" font-size="11.5" fill="#333333" font-weight="normal" text-anchor="start" >:</text>
<text x="449.7" y="363.3" font-size="12" fill="#222222" font-weight="bold" text-anchor="start" letter-spacing="1.05">0.3392</text>
<text x="364.8" y="379.2" font-size="11.5" fill="#888888" font-weight="normal" text-anchor="start" textLength="72.4" lengthAdjust="spacingAndGlyphs" >UK 5 Results</text>
<text x="441.7" y="379.2" font-size="11.5" fill="#333333" font-weight="normal" text-anchor="start" >:</text>
<text x="449.7" y="379.2" font-size="12" fill="#222222" font-weight="bold" text-anchor="start" letter-spacing="1.05">0.055</text>
<g filter="url(#tsh)"><rect x="974.5" y="167.5" width="236" height="144" rx="3" fill="rgba(255,255,255,0.86)" stroke="#a8d3ee" stroke-width="1"/></g>
<text x="982.8" y="188" font-size="9.3" fill="#333333" font-weight="normal" text-anchor="start" textLength="100" lengthAdjust="spacingAndGlyphs" >Friday, Apr 15, 2016</text>
<text x="982.8" y="203.8" font-size="11.5" fill="#a8d3ee" font-weight="normal" text-anchor="start" textLength="164" lengthAdjust="spacingAndGlyphs" >UK Average Results Per Page</text>
<text x="1151.3" y="203.8" font-size="11.5" fill="#333333" font-weight="normal" text-anchor="start" >:</text>
<text x="1159.3" y="203.8" font-size="12" fill="#222222" font-weight="bold" text-anchor="start" letter-spacing="1.05">9.6379</text>
<text x="982.8" y="219.7" font-size="11.5" fill="#50b1dc" font-weight="normal" text-anchor="start" textLength="79.3" lengthAdjust="spacingAndGlyphs" >UK 10 Results</text>
<text x="1066.6" y="219.7" font-size="11.5" fill="#333333" font-weight="normal" text-anchor="start" >:</text>
<text x="1074.6" y="219.7" font-size="12" fill="#222222" font-weight="bold" text-anchor="start" letter-spacing="1.05">70.9313</text>
<text x="982.8" y="235.6" font-size="11.5" fill="#aeabcb" font-weight="normal" text-anchor="start" textLength="72.4" lengthAdjust="spacingAndGlyphs" >UK 9 Results</text>
<text x="1059.7" y="235.6" font-size="11.5" fill="#333333" font-weight="normal" text-anchor="start" >:</text>
<text x="1067.7" y="235.6" font-size="12" fill="#222222" font-weight="bold" text-anchor="start" letter-spacing="1.05">24.8574</text>
<text x="982.8" y="251.5" font-size="11.5" fill="#445ebd" font-weight="normal" text-anchor="start" textLength="72.4" lengthAdjust="spacingAndGlyphs" >UK 8 Results</text>
<text x="1059.7" y="251.5" font-size="11.5" fill="#333333" font-weight="normal" text-anchor="start" >:</text>
<text x="1067.7" y="251.5" font-size="12" fill="#222222" font-weight="bold" text-anchor="start" letter-spacing="1.05">1.7622</text>
<text x="982.8" y="267.4" font-size="11.5" fill="#5dbfe8" font-weight="normal" text-anchor="start" textLength="72.4" lengthAdjust="spacingAndGlyphs" >UK 7 Results</text>
<text x="1059.7" y="267.4" font-size="11.5" fill="#333333" font-weight="normal" text-anchor="start" >:</text>
<text x="1067.7" y="267.4" font-size="12" fill="#222222" font-weight="bold" text-anchor="start" letter-spacing="1.05">2.026</text>
<text x="982.8" y="283.3" font-size="11.5" fill="#1cc0a7" font-weight="normal" text-anchor="start" textLength="72.4" lengthAdjust="spacingAndGlyphs" >UK 6 Results</text>
<text x="1059.7" y="283.3" font-size="11.5" fill="#333333" font-weight="normal" text-anchor="start" >:</text>
<text x="1067.7" y="283.3" font-size="12" fill="#222222" font-weight="bold" text-anchor="start" letter-spacing="1.05">0.3727</text>
<text x="982.8" y="299.2" font-size="11.5" fill="#888888" font-weight="normal" text-anchor="start" textLength="72.4" lengthAdjust="spacingAndGlyphs" >UK 5 Results</text>
<text x="1059.7" y="299.2" font-size="11.5" fill="#333333" font-weight="normal" text-anchor="start" >:</text>
<text x="1067.7" y="299.2" font-size="12" fill="#222222" font-weight="bold" text-anchor="start" letter-spacing="1.05">0.0503</text>
<path d="M536.3,435 L536.3,451.5 L540.2,447.8 L543,454 L545.6,452.8 L542.9,446.8 L548,446.6 Z" fill="#fff" stroke="#111" stroke-width="1.1" stroke-linejoin="round"/>
</svg></body></html>
